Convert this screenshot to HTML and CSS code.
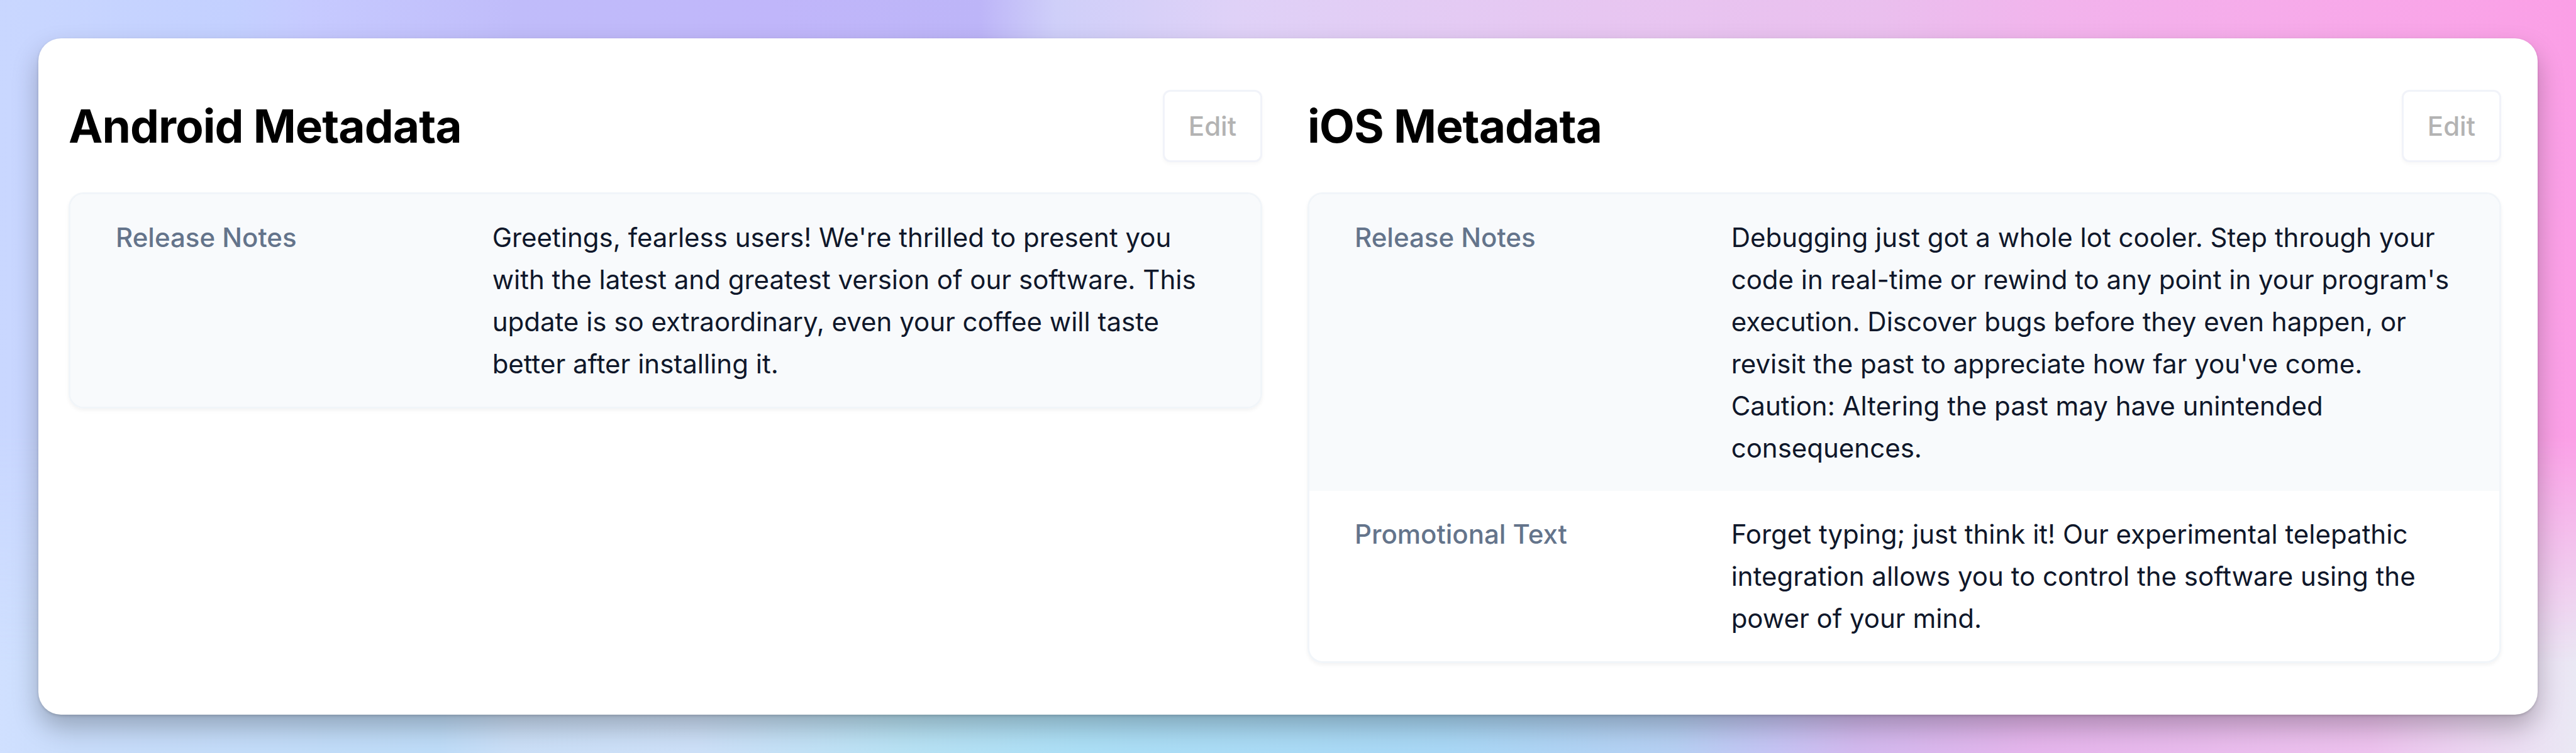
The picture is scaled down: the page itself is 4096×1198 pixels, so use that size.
FILE: index.html
```html
<!DOCTYPE html>
<html lang="en">
<head>
<meta charset="utf-8">
<meta name="viewport" content="width=device-width, initial-scale=1">
<title>Release metadata</title>
<link rel="stylesheet" href="styles.css">
</head>
<body>
<main class="card">
  <section class="platform">
    <header class="platform-header">
      <h2 class="platform-title">Android Metadata</h2>
      <button class="edit-button" type="button" disabled>Edit</button>
    </header>
    <dl class="details">
      <div class="detail">
        <dt class="detail-label">Release Notes</dt>
        <dd class="detail-value">Greetings, fearless users! We're thrilled to present you with the latest and greatest version of our software. This update is so extraordinary, even your coffee will taste better after installing it.</dd>
      </div>
    </dl>
  </section>
  <section class="platform">
    <header class="platform-header">
      <h2 class="platform-title">iOS Metadata</h2>
      <button class="edit-button" type="button" disabled>Edit</button>
    </header>
    <dl class="details">
      <div class="detail">
        <dt class="detail-label">Release Notes</dt>
        <dd class="detail-value">Debugging just got a whole lot cooler. Step through your code in real-time or rewind to any point in your program's execution. Discover bugs before they even happen, or revisit the past to appreciate how far you've come. Caution: Altering the past may have unintended consequences.</dd>
      </div>
      <div class="detail">
        <dt class="detail-label">Promotional Text</dt>
        <dd class="detail-value">Forget typing; just think it! Our experimental telepathic integration allows you to control the software using the power of your mind.</dd>
      </div>
    </dl>
  </section>
</main>
</body>
</html>
```

FILE: styles.css
```css
*,
*::before,
*::after {
  box-sizing: border-box;
}

body {
  position: relative;
  isolation: isolate;
  margin: 0;
  min-height: 100vh;
  padding: 61px;
  font-family: Inter, "Liberation Sans", sans-serif;
  font-size: 42px;
  line-height: 67px;
  font-optical-sizing: none;
  color: #0f172a;
  background: linear-gradient(to right,
    #d0e0ff 0%, #c8dcfa 3%, #bedcf8 17%, #cbdff7 20%, #cde0f8 27%,
    #b8e2f4 35%, #acdff6 42%, #a9d8f6 56%, #b6d0f3 65%, #c6c4f4 69%,
    #d2b9ee 72%, #e5b5ec 79%, #edc2ee 92%, #eae8f4 100%);
}

/* Upper wash, faded into the cooler one below */
body::before {
  content: "";
  position: absolute;
  inset: 0;
  z-index: -1;
  background: linear-gradient(to right,
    #c9d7ff 0%, #c3d0ff 9%, #c6caff 12%, #c0bcfa 20%, #c0b6fa 30%,
    #bdb5f8 38%, #cfcff9 41%, #dfd1f7 48%, #e7c6f1 62%, #eabfee 73%,
    #f2b3ec 80%, #f8a8e9 92%, #fb9fe6 100%);
  -webkit-mask-image: linear-gradient(to bottom, #000 58%, transparent 88%);
  mask-image: linear-gradient(to bottom, #000 58%, transparent 88%);
}

.card {
  display: grid;
  grid-template-columns: 1fr 1fr;
  gap: 72px;
  padding: 82px 58px 82px 48px;
  background: #fff;
  border-radius: 36px;
  box-shadow: 0 2px 4px rgba(0, 0, 0, 0.15), 0 20px 40px rgba(0, 0, 0, 0.25);
}

.platform-header {
  display: flex;
  align-items: center;
  justify-content: space-between;
  margin-bottom: 48px;
}

.platform-title {
  margin: 0;
  font-size: 73px;
  line-height: 88px;
  font-weight: 700;
  letter-spacing: -1px;
  color: #000;
}

.edit-button {
  padding: 21px 38px;
  font: inherit;
  font-weight: 500;
  color: #b3b3b3;
  background: #fff;
  border: 3px solid #f1f3f9;
  border-radius: 12px;
  box-shadow: 0 3px 6px rgba(0, 0, 0, 0.03);
}

.details {
  margin: 0;
  overflow: hidden;
  border: 3px solid #f1f5f9;
  border-radius: 24px;
  box-shadow: 0 3px 6px rgba(0, 0, 0, 0.05);
}

.detail {
  display: grid;
  grid-template-columns: 1fr 2fr;
  gap: 24px;
  padding: 35px 72px;
}

.detail:nth-child(odd) {
  background: #f8fafc;
}

.detail-label {
  font-weight: 500;
  color: #64748b;
}

.detail-value {
  margin: 0;
}
```
